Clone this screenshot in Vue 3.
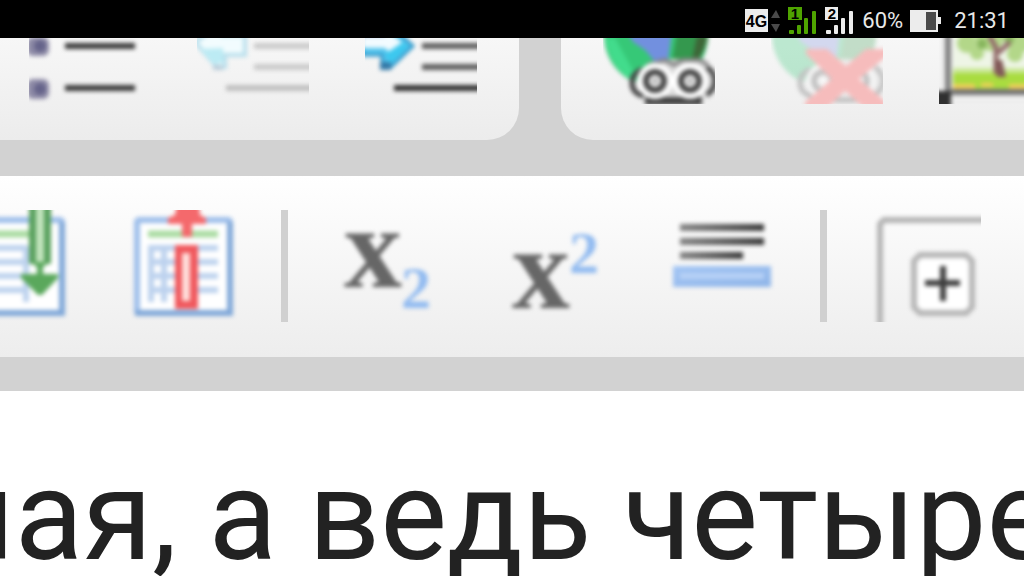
<script setup>
const gridRows = [38, 52, 66, 80]
const gridCols = [24, 37, 51]
</script>

<template>
  <div class="screen">
    <header class="status">
      <svg class="net" width="36" height="24" viewBox="0 0 36 24" aria-label="4G">
        <rect width="23" height="23" fill="#ececec" />
        <text x="11.5" y="17.5" text-anchor="middle" class="net-text">4G</text>
        <path d="M26 9l5-8 4 8zM26 15h9l-4 8z" fill="#4a4a4a" />
      </svg>
      <svg class="sim" width="29" height="28" viewBox="0 0 29 28" aria-label="SIM 1">
        <path fill="#4fa400" d="M0 0h14v13H0z" />
        <text x="7" y="12" text-anchor="middle" class="sim-text">1</text>
        <g fill="#4fa400"><rect x="1" y="23" width="5" height="4" rx="1" /><rect x="9" y="18" width="4" height="9" rx="1" /><rect x="16" y="11" width="4" height="16" rx="1" /><rect x="24" y="4" width="4" height="23" rx="1" /></g>
      </svg>
      <svg class="sim" width="29" height="28" viewBox="0 0 29 28" aria-label="SIM 2">
        <path fill="#ececec" d="M0 0h13v13H0z" />
        <text x="7" y="12" text-anchor="middle" class="sim-text">2</text>
        <g fill="#ececec"><rect x="1" y="23" width="5" height="4" rx="1" /><rect x="9" y="18" width="4" height="9" rx="1" /><rect x="16" y="11" width="4" height="16" rx="1" /><rect x="24" y="4" width="4" height="23" rx="1" /></g>
      </svg>
      <span class="percent">60%</span>
      <svg class="battery" width="32" height="22" viewBox="0 0 32 22" aria-label="Battery">
        <path fill="#ececec" d="M0 0h28v7h3v7h-3v8H0z" /><path fill="#4b4b4b" d="M16 2h10v18H16z" />
      </svg>
      <time>21:31</time>
    </header>

    <main class="page">
      <div class="bar-top" role="toolbar">
        <div class="group group-lists">
          <button type="button" aria-label="Bulleted list">
            <svg viewBox="0 0 112 112"><g class="soft">
              <g fill="#8d8aa6"><rect x="-2" y="45" width="22" height="19" rx="6" /><rect x="-2" y="87" width="22" height="20" rx="6" /></g>
              <g fill="#65638a"><circle cx="11" cy="54" r="6" /><circle cx="11" cy="97" r="6" /></g>
              <path d="M36 54h70M36 96h70" stroke="#3c3c3c" stroke-width="6" />
            </g></svg>
          </button>
          <button type="button" aria-label="Decrease indent" disabled>
            <svg viewBox="0 0 112 112"><g class="soft">
              <path d="M-2 50L26 30V43H48V63H28V75H20z" fill="#f2fcfe" stroke="#b9dfec" stroke-width="4" />
              <path d="M3 57l13 15 10-1V56z" fill="#bcebf4" /><path d="M16 73h10v5H16z" fill="#b9cdda" />
              <path d="M57 54h60M57 75h60" stroke="#cacaca" stroke-width="6" /><path d="M29 96h90" stroke="#bfbfbf" stroke-width="6" />
            </g></svg>
          </button>
          <button type="button" aria-label="Increase indent">
            <svg viewBox="0 0 112 112"><g class="soft">
              <path d="M-3 42H20V28L48 54L25 76H17V63H-3z" fill="#55c6ee" stroke="#2e96c9" stroke-width="3" />
              <path d="M-3 41h28l13 10-13 10-5-5H-3z" fill="#f2fbff" />
              <path d="M-3 42h23" stroke="#aebde2" stroke-width="5" />
              <path d="M20 62l18-12 5 5-18 17z" fill="#3cc8ef" /><path d="M15 70h11v8H15z" fill="#347aa8" />
              <path d="M57 54h60M57 75h60" stroke="#5e5e5e" stroke-width="6" /><path d="M29 96h90" stroke="#303030" stroke-width="6" />
            </g></svg>
          </button>
        </div>
        <div class="group group-insert">
          <button type="button" aria-label="Link">
            <svg viewBox="0 0 112 112"><g class="soft">
              <circle cx="53" cy="43" r="52" fill="#36c877" />
              <path d="M2 46h10l20 36-6 4Q8 74 2 46z" fill="#42dc8c" />
              <path d="M74 40h32q-2 20-14 34H68z" fill="#34984e" /><path d="M94 44h10q-3 20-16 29z" fill="#3d6638" />
              <path d="M24 40h45l-4 30H52L42 58 30 50z" fill="#7290df" />
              <path d="M45 76l22-9 35 1 10 16-6 22H45L30 92z" fill="#d8d8d8" />
              <path d="M42 105h57v8H42z" fill="#414141" />
              <path d="M40 77q-12 5-11 15t12 12M104 75q8 6 8 14t-8 14" fill="none" stroke="#444" stroke-width="5" />
              <path d="M44 73l18-5 9 5 9-5h17l8 5" fill="none" stroke="#888" stroke-width="4" />
              <g fill="#fff"><circle cx="52" cy="89" r="18" /><circle cx="87" cy="89" r="18" /></g>
              <g fill="#fff" stroke="#444" stroke-width="6"><circle cx="52" cy="89" r="9" /><circle cx="87" cy="89" r="9" /></g>
              <g fill="#aaa"><circle cx="52" cy="89" r="3" /><circle cx="87" cy="89" r="3" /></g>
            </g></svg>
          </button>
          <button type="button" aria-label="Unlink" disabled>
            <svg viewBox="0 0 112 112"><g class="soft">
              <g opacity=".3">
                <circle cx="53" cy="43" r="52" fill="#36c877" /><path d="M74 40h32q-2 20-14 34H68z" fill="#4aa45d" />
                <path d="M24 40h45l-4 30H52L42 58 30 50z" fill="#8092dc" />
                <path d="M45 76l22-9 35 1 10 16-6 22H45L30 92z" fill="#ddd" />
                <path d="M40 77q-12 5-11 15t12 12M104 75q8 6 8 14t-8 14M42 108h57" fill="none" stroke="#555" stroke-width="5" />
                <g fill="#fff"><circle cx="52" cy="89" r="17" /><circle cx="87" cy="89" r="17" /></g>
                <g fill="#fff" stroke="#555" stroke-width="6"><circle cx="52" cy="89" r="9" /><circle cx="87" cy="89" r="9" /></g>
              </g>
              <path d="M35 57h21l19 17 20-17h22v6L88 87l27 23v6H93L74 99l-18 17H34v-6l27-23-26-25z" fill="#f6bcbc" />
            </g></svg>
          </button>
          <button type="button" aria-label="Image">
            <svg viewBox="0 0 112 112"><g class="soft">
              <path d="M2 0h110v112H2z" fill="#eee" /><path d="M9 -5V100H120" fill="none" stroke="#808080" stroke-width="6" />
              <path d="M14 0h100v97H14z" fill="#eef5e6" />
              <path d="M14 78h100v19H14z" fill="#a9dc40" /><path d="M14 76h100v5H14z" fill="#cbe89a" /><path d="M14 92h22v5H14zM42 91h12v4H42zM70 92h44v5H70z" fill="#f0cf58" />
              <g fill="#b3d789"><circle cx="28" cy="51" r="10" /><circle cx="51" cy="45" r="14" /><circle cx="80" cy="48" r="13" /><circle cx="76" cy="62" r="8" /><circle cx="38" cy="61" r="7" /></g>
              <g fill="#87b55d"><circle cx="43" cy="52" r="5" /><circle cx="70" cy="47" r="5" /></g>
              <path d="M50 43l7 13v26M59 61l12-11" fill="none" stroke="#936c6b" stroke-width="5" /><path d="M55 68h8l4 17H58z" fill="#815857" />
              <path d="M14 100h100" stroke="#707070" stroke-width="5" /><path d="M-4 99h16v20H-4z" fill="#303030" />
            </g></svg>
          </button>
        </div>
      </div>

      <div class="bar-main" role="toolbar">
        <button type="button" aria-label="Insert column">
          <svg viewBox="0 0 112 112"><g class="soft">
            <rect x="10" y="10" width="93" height="93" rx="2" fill="#fff" stroke="#9dbeea" stroke-width="6" />
            <path d="M103 12v91H8" fill="none" stroke="#7fa7d8" stroke-width="6" />
            <path d="M20 24h52" stroke="#abdca3" stroke-width="7" />
            <path v-for="y in gridRows" :key="y" :d="`M20 ${y}h48`" stroke="#bdd2ee" stroke-width="6" />
            <path d="M67 36v56" stroke="#bdd2ee" stroke-width="6" />
            <path d="M70-6h22v60H70z" fill="#58a05d" /><path d="M81-6v60" stroke="#c2e4bd" stroke-width="8" />
            <path d="M71 52h20l-7 5v7h15v4L83 85h-4L62 68v-4h16v-7z" fill="#5aa85c" />
            <path d="M71 58h6v4h-7zM86 58h5l2 4h-7z" fill="#fff" />
          </g></svg>
        </button>
        <button type="button" aria-label="Delete column">
          <svg viewBox="0 0 112 112"><g class="soft">
            <rect x="10" y="10" width="93" height="93" rx="2" fill="#fff" stroke="#9dbeea" stroke-width="6" />
            <path d="M103 12v91H8" fill="none" stroke="#7fa7d8" stroke-width="6" />
            <path d="M21 24h70" stroke="#abdca3" stroke-width="7" />
            <path v-for="y in gridRows" :key="y" :d="`M21 ${y}h70`" stroke="#bdd2ee" stroke-width="6" />
            <path v-for="x in gridCols" :key="x" :d="`M${x} 36v56`" stroke="#bdd2ee" stroke-width="6" />
            <path d="M50-6h22L73 5l6 3v6H65v13H55V14H41V8l7-3z" fill="#f4696c" />
            <path d="M48 35h23v64H48z" fill="#f0585d" /><path d="M59 43v48" stroke="#ffdedb" stroke-width="8" />
          </g></svg>
        </button>
        <span class="separator"></span>
        <button type="button" aria-label="Subscript">
          <svg viewBox="0 0 112 112"><g class="soft">
            <text x="14" y="77" class="glyph" fill="#666">x</text><text x="71" y="98" class="digit" fill="#92bbf0">2</text>
          </g></svg>
        </button>
        <button type="button" aria-label="Superscript">
          <svg viewBox="0 0 112 112"><g class="soft">
            <text x="14" y="98" class="glyph" fill="#666">x</text><text x="71" y="63" class="digit" fill="#92bbf0">2</text>
          </g></svg>
        </button>
        <button type="button" aria-label="Horizontal line">
          <svg viewBox="0 0 112 112">
            <defs>
              <linearGradient id="ink"><stop offset="0" stop-color="#858585" /><stop offset="1" stop-color="#3a3a3a" /></linearGradient>
              <linearGradient id="sky" x2="1" y2="1"><stop offset="0" stop-color="#a3c5f4" /><stop offset="1" stop-color="#8fb5e8" /></linearGradient>
            </defs>
            <g class="soft">
              <g fill="url(#ink)"><rect x="14" y="14" width="84" height="7" /><rect x="14" y="28" width="84" height="7" /><rect x="14" y="42" width="63" height="7" /></g>
              <rect x="7" y="56" width="98" height="21" fill="url(#sky)" /><path d="M14 66h84" stroke="#b7d1f6" stroke-width="6" />
            </g>
          </svg>
        </button>
        <span class="separator"></span>
        <button type="button" aria-label="Show blocks">
          <svg viewBox="0 0 112 112"><g class="soft">
            <path d="M11 118V14l4-4H118" fill="none" stroke="#b4b4b4" stroke-width="6" />
            <path d="M51 45H97l6 6V97l-6 6H51l-6-6V51z" fill="#fff" stroke="#b6b6b6" stroke-width="6" />
            <path d="M56 73h35M74 56v35" stroke="#3e3e3e" stroke-width="6" />
          </g></svg>
        </button>
      </div>

      <article class="editor"><p>ная, а ведь четыре</p></article>
    </main>
  </div>
</template>

<style>
body { margin: 0; background: #fff; }
</style>

<style scoped>
.screen {
  display: flex;
  flex-direction: column;
  height: 100vh;
  overflow: hidden;
  font-family: Roboto, "Noto Sans", sans-serif;
}
.status {
  display: flex;
  flex: none;
  align-items: center;
  justify-content: flex-end;
  height: 38px;
  padding: 3px 15px 0 0;
  box-sizing: border-box;
  background: #000;
  color: #e8e8e8;
  font-size: 22px;
  line-height: 38px;
}
.net { margin-right: 7px; }
.sim { margin-right: 8px; }
.percent { margin-right: 7px; }
.battery { margin-right: 12px; }
.net-text { font: bold 16px "Liberation Sans", sans-serif; }
.sim-text { font: bold 15px "Liberation Sans", sans-serif; }
.page {
  display: flex;
  flex: 1;
  flex-direction: column;
  min-height: 0;
  background: #d2d2d2;
}
.bar-top { display: flex; flex: none; gap: 42px; }
.group {
  display: flex;
  align-items: flex-end;
  height: 102px;
  padding-bottom: 36px;
  box-sizing: border-box;
  overflow: hidden;
  background: linear-gradient(#f7f7f7, #ececec);
}
.group-lists {
  flex: none;
  padding-left: 1px;
  padding-right: 14px;
  border-bottom-right-radius: 32px;
}
.group-insert {
  flex: 1;
  min-width: 0;
  padding-left: 14px;
  border-bottom-left-radius: 32px;
}
button {
  flex: none;
  margin: 0;
  padding: 0 28px;
  border: 0;
  background: none;
}
button svg { display: block; width: 112px; height: 112px; overflow: hidden; }
.soft { filter: blur(2px); }
.bar-main {
  display: flex;
  flex: none;
  margin: 36px 0 34px;
  padding: 34px 0 35px;
  overflow: hidden;
  background: linear-gradient(#fff, #ededed);
}
.bar-main button:first-child { margin-left: -69px; }
.separator { flex: none; width: 7px; margin: 0 14px; background: #d0d0d0; }
.glyph { font: bold 116px "Liberation Serif", serif; }
.digit { font: bold 60px "Liberation Serif", serif; }
.editor {
  flex: 1;
  min-height: 0;
  padding-top: 51px;
  overflow: hidden;
  background: #fff;
}
.editor p {
  margin: 0 0 0 -58px;
  color: #222;
  font-size: 126px;
  line-height: 148px;
  white-space: nowrap;
}
</style>
